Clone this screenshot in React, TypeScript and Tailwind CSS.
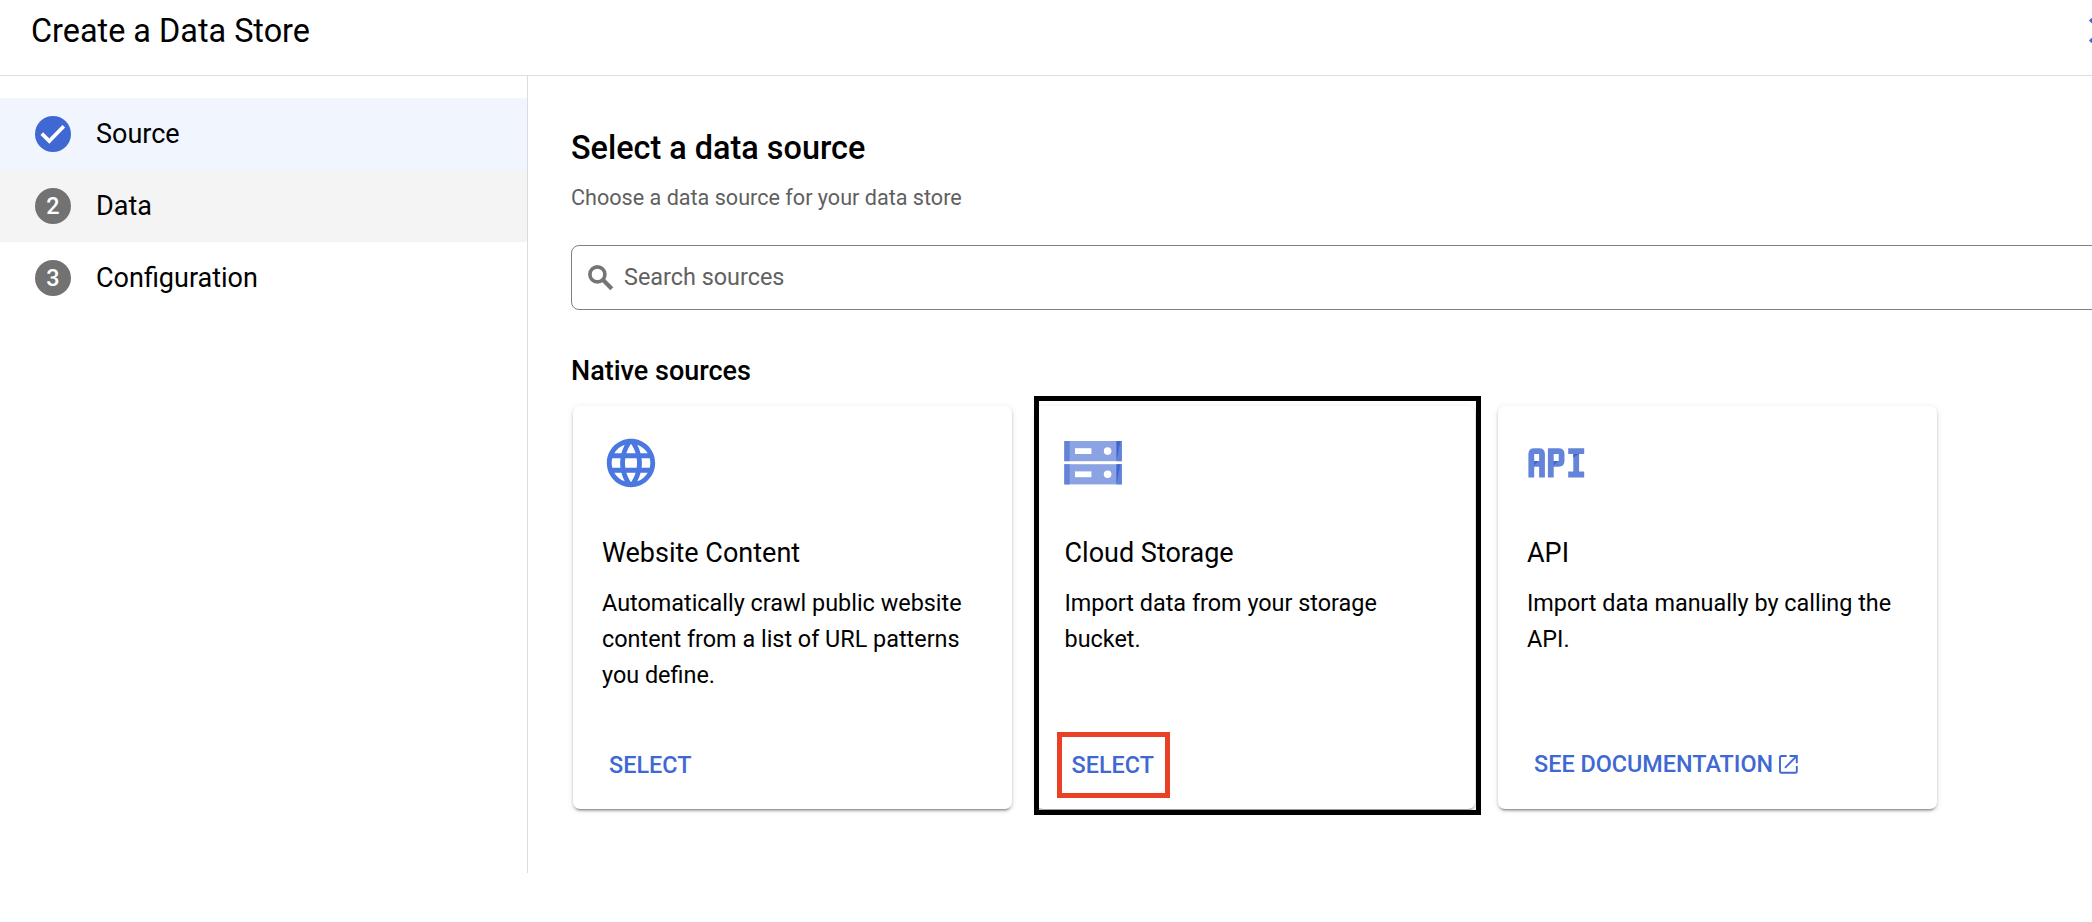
import React from "react";

function CheckIcon() {
  return (
    <svg viewBox="0 0 36 36" className="size-9" fill="none">
      <circle cx="18" cy="18" r="18" fill="#4068d3" />
      <path d="M6.8 17.6l7.5 7.5L28.8 10.2" stroke="#fff" strokeWidth="3.7" />
    </svg>
  );
}

function SearchIcon() {
  return (
    <svg viewBox="0 0 34 34" className="size-[34px]" fill="none" stroke="#757575">
      <circle cx="13.4" cy="13.4" r="7.5" strokeWidth="3.6" />
      <path d="M18.6 18.6L27.8 27.8" strokeWidth="4.2" />
    </svg>
  );
}

function CloseIcon() {
  return (
    <svg viewBox="0 0 24 24" className="size-[43px] shrink-0" fill="#4068d3">
      <path d="M19 6.41L17.59 5 12 10.59 6.41 5 5 6.41 10.59 12 5 17.59 6.41 19 12 13.41 17.59 19 19 17.59 13.41 12z" />
    </svg>
  );
}

function GlobeIcon() {
  return (
    <svg viewBox="0 0 24 24" className="size-[58px]" fill="#4a78e0">
      <path d="M11.99 2C6.47 2 2 6.48 2 12s4.47 10 9.99 10C17.52 22 22 17.52 22 12S17.52 2 11.99 2zm6.93 6h-2.95c-.32-1.25-.78-2.45-1.38-3.56 1.84.63 3.37 1.91 4.33 3.56zM12 4.04c.83 1.2 1.48 2.53 1.91 3.96h-3.82c.43-1.43 1.08-2.76 1.91-3.96zM4.26 14C4.1 13.36 4 12.69 4 12s.1-1.36.26-2h3.38c-.08.66-.14 1.32-.14 2s.06 1.34.14 2H4.26zm.82 2h2.95c.32 1.25.78 2.45 1.38 3.56-1.84-.63-3.37-1.9-4.33-3.56zm2.95-8H5.08c.96-1.66 2.49-2.93 4.33-3.56C8.81 5.55 8.35 6.75 8.03 8zM12 19.96c-.83-1.2-1.48-2.53-1.91-3.96h3.82c-.43 1.43-1.08 2.76-1.91 3.96zM14.34 14H9.66c-.09-.66-.16-1.32-.16-2s.07-1.35.16-2h4.68c.09.65.16 1.32.16 2s-.07 1.34-.16 2zm.25 5.56c.6-1.11 1.06-2.31 1.38-3.56h2.95c-.96 1.65-2.49 2.93-4.33 3.56zM16.36 14c.08-.66.14-1.32.14-2s-.06-1.34-.14-2h3.38c.16.64.26 1.31.26 2s-.1 1.36-.26 2h-3.38z" />
    </svg>
  );
}

function StorageIcon() {
  return (
    <svg viewBox="0 0 58 58" className="-ml-px size-[58px]">
      {[7, 30.2].map((y) => (
        <g key={y} transform={`translate(0.3 ${y})`}>
          <rect width="57.6" height="20.2" fill="#8ba3e2" />
          <rect width="5.4" height="20.2" fill="#6383d8" />
          <rect x="52.2" width="5.4" height="20.2" fill="#6383d8" />
          <path d="M52.2 0h4L52.2 20.2z" fill="#4067cf" />
          <rect x="10.7" y="7.2" width="16.4" height="5.8" fill="#fff" />
          <circle cx="43.3" cy="10.1" r="3.8" fill="#fff" />
        </g>
      ))}
    </svg>
  );
}

function ApiIcon() {
  return (
    <svg viewBox="0 0 58 58" className="size-[58px]" fill="none" stroke="#6484d9" strokeWidth="5.8">
      <path d="M4.3 43.4V20.2q0-3 3-3H12q3 0 3 3V43.4M4.1 29.8H15" />
      <path d="M23.8 43.4V17.2H31.6q3 0 3 3V26.8q0 3-3 3H23.8" />
      <path d="M41.2 17.2h16M41.2 40.5h16M49.2 17V41" />
      <g stroke="none" fill="#4067cf">
        <path d="M7.1 27h4.6l-4.6 4.4zM26.7 27h4.6l-4.6 4.4zM46.3 20.1H52.1l-5.8 3.6z" />
      </g>
    </svg>
  );
}

function OpenIcon() {
  return (
    <svg viewBox="0 0 19 19" className="ml-1.5 size-[19px]" fill="none" stroke="#4068d3" strokeWidth="1.9">
      <path d="M7.6 1H2.4Q1 1 1 2.4V16.4q0 1.4 1.4 1.4H16.4q1.4 0 1.4-1.4V11" />
      <path d="M10.6 1H17.8V8.2M17.6 1.2L6 12.8" />
    </svg>
  );
}

function Step({ label, tone, children }: { label: string; tone: string; children: React.ReactNode }) {
  return (
    <li className={`flex h-18 items-center gap-[25px] pl-[35px] ${tone}`}>
      {children}
      <span className="text-[27px]">{label}</span>
    </li>
  );
}

function StepNumber({ n }: { n: number }) {
  return (
    <span className="flex size-9 items-center justify-center rounded-full bg-[#727272] pt-px text-[23.4px] font-medium text-white">
      {n}
    </span>
  );
}

type CardProps = {
  icon: React.ReactNode;
  title: string;
  lines: string[];
  action: React.ReactNode;
  highlighted?: boolean;
};

function SourceCard({ icon, title, lines, action, highlighted }: CardProps) {
  return (
    <article className="relative flex h-[403px] w-[439px] flex-col rounded-[7px] bg-white px-[29px] pt-7 shadow-[0_4px_2px_-3px_rgba(0,0,0,0.3),0_2px_3px_0_rgba(0,0,0,0.2),0_1px_7px_0_rgba(0,0,0,0.09)]">
      {icon}
      <h3 className="mt-[43px] text-[27px] leading-9">{title}</h3>
      <div className="mt-3.5 text-[23.4px] leading-9">
        {lines.map((line) => (
          <p key={line} className="whitespace-nowrap">{line}</p>
        ))}
      </div>
      <div className="mt-auto mb-[25px] flex h-9 items-center pl-[7px] text-[23.4px] font-medium text-[#4068d3]">
        {action}
      </div>
      {highlighted && (
        <>
          <div className="absolute -top-2.5 -left-[1.5px] h-[419px] w-[447px] border-5 border-black" />
          <div className="absolute top-[326px] left-[21.5px] h-[66px] w-[113px] border-5 border-[#ea4025]" />
        </>
      )}
    </article>
  );
}

export default function App() {
  return (
    <div className="h-[922px] w-[2092px] overflow-hidden bg-white font-['Roboto',sans-serif] text-black">
      <header className="flex h-[76px] justify-between overflow-hidden border-b border-[#dedede] pl-[31px]">
        <h1 className="pt-[13px] text-[32.4px] leading-9">Create a Data Store</h1>
        <div className="-mr-[31px] pt-[9px]">
          <CloseIcon />
        </div>
      </header>
      <div className="flex h-[797px]">
        <nav className="w-[528px] shrink-0 border-r border-[#dcdcdc] pt-[22px]">
          <ol>
            <Step label="Source" tone="bg-[#f0f5fe]"><CheckIcon /></Step>
            <Step label="Data" tone="bg-[#f4f4f4]"><StepNumber n={2} /></Step>
            <Step label="Configuration" tone="bg-white"><StepNumber n={3} /></Step>
          </ol>
        </nav>
        <main className="w-[1564px] shrink-0 pt-[54px] pl-[43px]">
          <h2 className="text-[32.4px] leading-9 font-medium">Select a data source</h2>
          <p className="mt-3.5 text-[21.6px] leading-9 text-[#5f5f5f]">Choose a data source for your data store</p>
          <div className="mt-[29px] flex h-[65px] w-[1560px] items-center gap-1.5 rounded-lg border border-[#808080] pl-3">
            <SearchIcon />
            <span className="text-[23.4px] text-[#616161]">Search sources</span>
          </div>
          <h2 className="mt-[43px] text-[27px] leading-9 font-medium">Native sources</h2>
          <div className="mt-[17px] ml-0.5 flex gap-[23.5px]">
            <SourceCard
              icon={<GlobeIcon />}
              title="Website Content"
              lines={["Automatically crawl public website", "content from a list of URL patterns", "you define."]}
              action="SELECT"
            />
            <SourceCard
              icon={<StorageIcon />}
              title="Cloud Storage"
              lines={["Import data from your storage", "bucket."]}
              action="SELECT"
              highlighted
            />
            <SourceCard
              icon={<ApiIcon />}
              title="API"
              lines={["Import data manually by calling the", "API."]}
              action={<span className="-mt-0.5 flex items-center">SEE DOCUMENTATION<OpenIcon /></span>}
            />
          </div>
        </main>
      </div>
    </div>
  );
}
